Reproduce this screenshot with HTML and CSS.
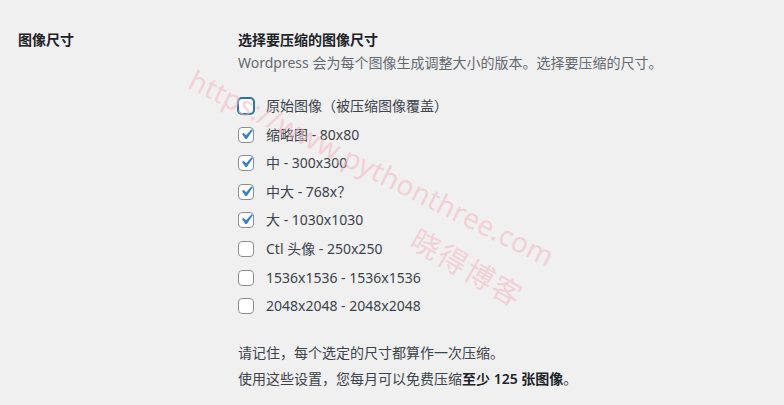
FILE: index.html
```html
<!DOCTYPE html>
<html>
<head>
	<title>图像尺寸</title>
	<link rel="stylesheet" href="styles.css">
</head>
<body>
	<div class="settings-row">
		<div class="row-label">图像尺寸</div>

		<div class="row-field">
			<h3 class="field-title">选择要压缩的图像尺寸</h3>
			<p class="field-desc">Wordpress 会为每个图像生成调整大小的版本。选择要压缩的尺寸。</p>

			<div class="size-list">
				<label class="size-item">
					<span class="check focused"></span>
					<span>原始图像（被压缩图像覆盖）</span>
				</label>
				<label class="size-item">
					<span class="check"><svg viewBox="0 0 20 20"><path d="M14.83 4.89l1.34.94-5.81 8.38H9.02L5.78 9.67l1.34-1.25 2.57 2.4z"/></svg></span>
					<span>缩略图 - 80x80</span>
				</label>
				<label class="size-item">
					<span class="check"><svg viewBox="0 0 20 20"><path d="M14.83 4.89l1.34.94-5.81 8.38H9.02L5.78 9.67l1.34-1.25 2.57 2.4z"/></svg></span>
					<span>中 - 300x300</span>
				</label>
				<label class="size-item">
					<span class="check"><svg viewBox="0 0 20 20"><path d="M14.83 4.89l1.34.94-5.81 8.38H9.02L5.78 9.67l1.34-1.25 2.57 2.4z"/></svg></span>
					<span>中大 - 768x？</span>
				</label>
				<label class="size-item">
					<span class="check"><svg viewBox="0 0 20 20"><path d="M14.83 4.89l1.34.94-5.81 8.38H9.02L5.78 9.67l1.34-1.25 2.57 2.4z"/></svg></span>
					<span>大 - 1030x1030</span>
				</label>
				<label class="size-item">
					<span class="check"></span>
					<span>Ctl 头像 - 250x250</span>
				</label>
				<label class="size-item">
					<span class="check"></span>
					<span>1536x1536 - 1536x1536</span>
				</label>
				<label class="size-item">
					<span class="check"></span>
					<span>2048x2048 - 2048x2048</span>
				</label>
			</div>

			<p class="note">请记住，每个选定的尺寸都算作一次压缩。</p>
			<p class="note">使用这些设置，您每月可以免费压缩<strong>至少 125 张图像</strong>。</p>
		</div>
	</div>

	<!-- watermark from the original screenshot -->
	<div class="watermark wm-url">https://www.pythonthree.com</div>
	<div class="watermark wm-name">晓得博客</div>
</body>
</html>
```

FILE: styles.css
```css
* {
	margin: 0;
	padding: 0;
	box-sizing: border-box;
}
body {
	background-color: #f0f0f1;
	color: #3c434a;
	font-family: "Noto Sans", "Noto Sans CJK SC", sans-serif;
	font-size: 14px;
	line-height: 20px;
	height: 405px;
	overflow: hidden;
}
.settings-row {
	display: flex;
	padding: 30px 18px 10px;
}
.row-label {
	width: 220px;
	flex-shrink: 0;
	font-weight: 600;
	color: #1d2327;
}
.row-field {
	flex: 1;
}
.field-title {
	font-size: 14px;
	font-weight: 600;
	color: #1d2327;
}
.field-desc {
	margin-top: 3px;
	color: #646970;
}
.size-list {
	display: flex;
	flex-direction: column;
	gap: 8.6px;
	margin-top: 23px;
}
.size-item {
	display: flex;
	align-items: center;
	gap: 12px;
	height: 20px;
}
.check {
	width: 16px;
	height: 16px;
	border: 1px solid #8c8f94;
	border-radius: 4px;
	background-color: #fff;
	position: relative;
}
.check svg {
	position: absolute;
	left: -3px;
	top: -4px;
	width: 21px;
	height: 21px;
	fill: #3582c4;
}
.check.focused {
	border-color: #2271b1;
	box-shadow: 0 0 0 1px #2271b1;
}
.note {
	line-height: 26px;
}
.size-list + .note {
	margin-top: 24px;
}
.note strong {
	font-weight: 600;
	color: #1d2327;
}
.watermark {
	position: absolute;
	color: #f2b8c0;
	opacity: 0.55;
	font-family: "Noto Sans", "Noto Sans CJK SC", sans-serif;
	transform-origin: left top;
	white-space: nowrap;
	pointer-events: none;
}
.wm-url {
	left: 198px;
	top: 64px;
	font-size: 28px;
	line-height: 30px;
	letter-spacing: 0.3px;
	transform: rotate(26.5deg);
}
.wm-name {
	left: 422px;
	top: 222px;
	font-size: 29px;
	line-height: 34px;
	letter-spacing: 2px;
	transform: rotate(30deg);
}
```
